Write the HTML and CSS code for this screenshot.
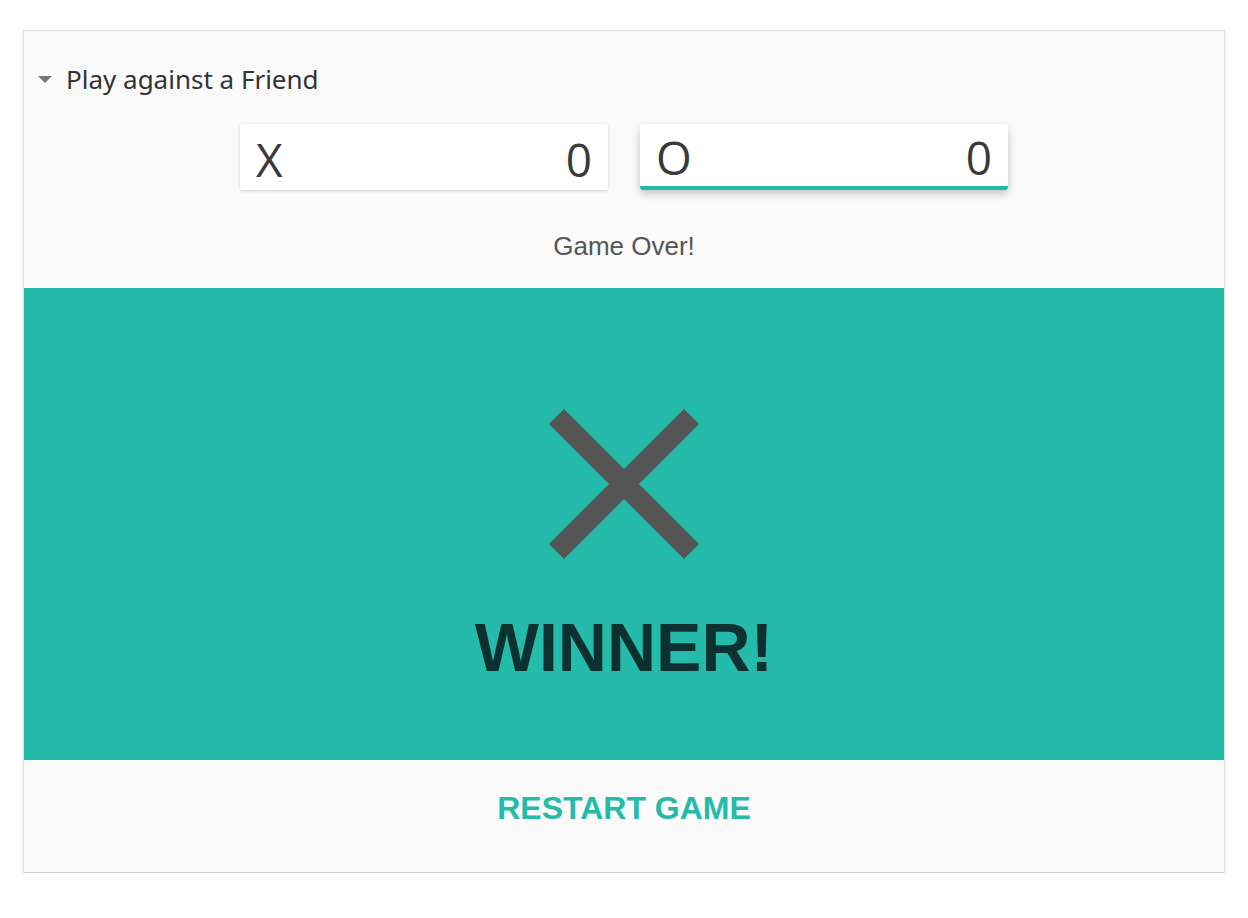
FILE: index.html
```html
<!DOCTYPE html>
<html>
<head>
<meta charset="utf-8">
<link rel="stylesheet" href="styles.css">
</head>
<body>
<div class="page">
  <section class="card">
    <header class="mode">
      <span class="caret"></span>
      <span class="mode-label">Play against a Friend</span>
    </header>
    <div class="scores">
      <div class="score">
        <span class="player">X</span>
        <span class="points">0</span>
      </div>
      <div class="score active">
        <span class="player">O</span>
        <span class="points">0</span>
      </div>
    </div>
    <p class="status">Game Over!</p>
    <div class="result">
      <svg class="mark" width="150" height="150" viewBox="0 0 150 150">
        <path d="M7.5 7.5 L142.5 142.5 M142.5 7.5 L7.5 142.5" stroke="#555555" stroke-width="21.2" stroke-linecap="butt" fill="none"/>
      </svg>
      <div class="winner">WINNER!</div>
    </div>
    <div class="footer">
      <button class="restart">RESTART GAME</button>
    </div>
  </section>
</div>
</body>
</html>
```

FILE: styles.css
```css
html, body {
  margin: 0;
  padding: 0;
  background: #ffffff;
}

.page {
  padding: 30px 23px 0 23px;
}

.card {
  background: #fafafa;
  border: 1px solid #e0e0e0;
  border-bottom-color: #cccccc;
  box-shadow: 0 2px 2px rgba(0, 0, 0, 0.12), 0 3px 6px rgba(0, 0, 0, 0.06);
  height: 841px;
  display: flex;
  flex-direction: column;
}

.mode {
  display: flex;
  align-items: center;
  height: 50px;
  margin-top: 23px;
  padding-left: 14px;
}

.caret {
  width: 0;
  height: 0;
  border-left: 7.5px solid transparent;
  border-right: 7.5px solid transparent;
  border-top: 7px solid #777777;
  margin-right: 14px;
}

.mode-label {
  font-family: "Noto Sans", "Open Sans", sans-serif;
  font-size: 26px;
  color: #333333;
}

.scores {
  display: flex;
  justify-content: center;
  gap: 32px;
  margin-top: 20px;
}

.score {
  width: 368px;
  height: 66px;
  box-sizing: border-box;
  background: #ffffff;
  border-radius: 3px;
  box-shadow: 0 1px 3px rgba(0, 0, 0, 0.18);
  display: flex;
  align-items: center;
  justify-content: space-between;
  padding: 4px 16px 0 16px;
  font-family: "Open Sans", "Noto Sans", sans-serif;
  font-size: 46px;
  color: #3a3a3a;
}

.score.active {
  border-bottom: 4px solid #25bbaa;
  padding-top: 4px;
  box-shadow: 0 4px 8px rgba(0, 0, 0, 0.22);
}

.status {
  margin: 0;
  height: 98px;
  padding-top: 14px;
  box-sizing: border-box;
  display: flex;
  align-items: center;
  justify-content: center;
  font-family: "Liberation Sans", Arial, sans-serif;
  font-size: 26px;
  color: #555555;
}

.result {
  background: #25bbaa;
  height: 472px;
  display: flex;
  flex-direction: column;
  align-items: center;
  padding-top: 121px;
  box-sizing: border-box;
}

.mark {
  display: block;
}

.winner {
  margin-top: 48px;
  font-family: "Liberation Sans", Arial, sans-serif;
  font-weight: bold;
  font-size: 68px;
  line-height: 80px;
  color: #0c3130;
}

.footer {
  flex: 1;
  display: flex;
  align-items: center;
  justify-content: center;
  padding-bottom: 16px;
}

.restart {
  background: none;
  border: none;
  padding: 0;
  font-family: "Liberation Sans", Arial, sans-serif;
  font-weight: bold;
  font-size: 32px;
  color: #25bbaa;
  cursor: pointer;
}
```
